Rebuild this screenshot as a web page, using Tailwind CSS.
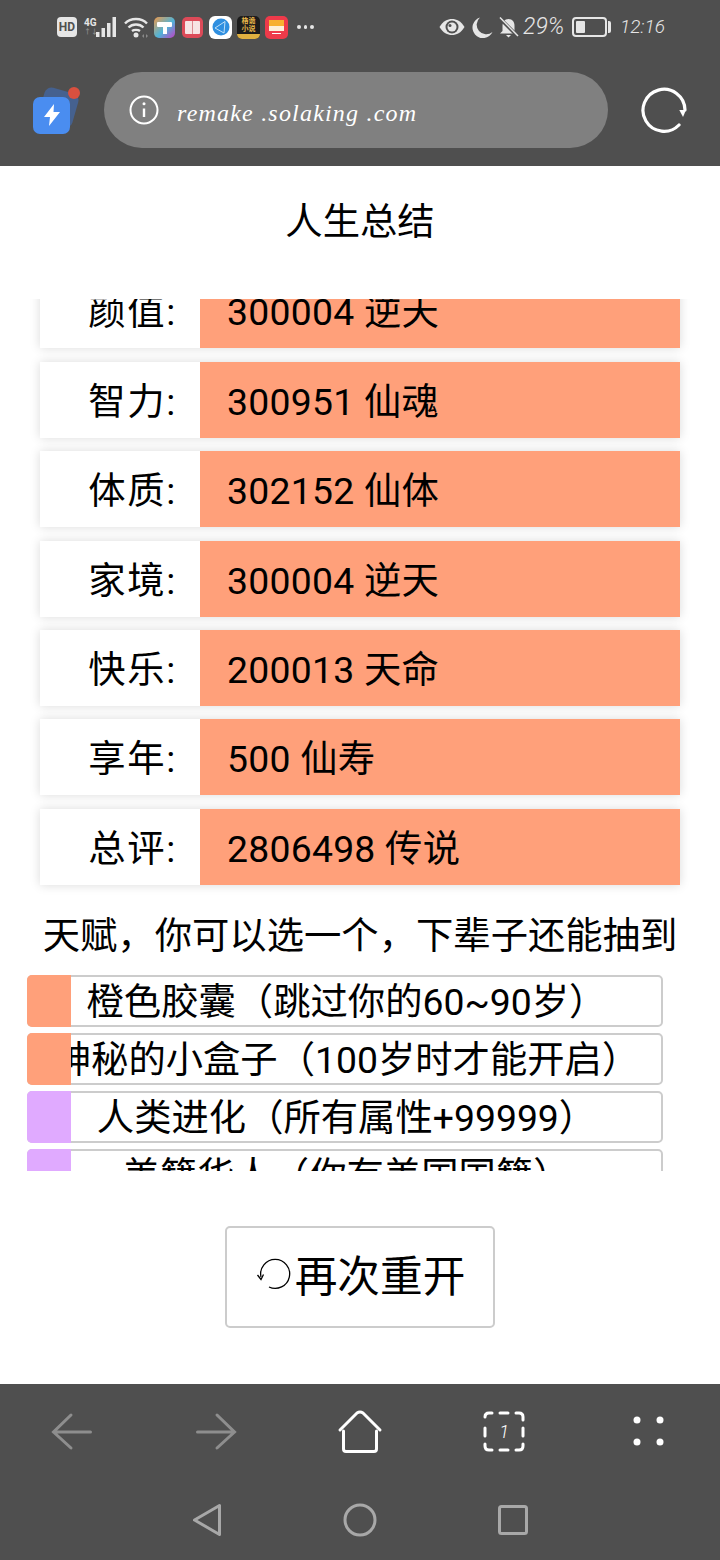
<!DOCTYPE html>
<html lang="zh">
<head>
    <meta charset="UTF-8">
    <meta name="viewport" content="width=device-width, initial-scale=1.0">
    <title>人生总结</title>
    <script src="https://cdn.jsdelivr.net/npm/@tailwindcss/browser@4"></script>
</head>
<body class="bg-white text-black font-['Roboto','Noto_Sans_CJK_SC',sans-serif]">
<div class="w-[720px] h-[1560px] flex flex-col overflow-hidden">

    <!-- 顶部状态栏 + 地址栏 -->
    <header class="h-[166px] shrink-0 bg-[#4f4f4f] flex flex-col">
        <div class="h-[72px] shrink-0 pl-[57px] pr-[57px] pt-[16px] flex justify-between items-start">
            <div class="flex items-center h-[22px]">
                <div class="w-[20px] h-[20px] rounded-[4px] bg-[#e6e6e6] text-[#4f4f4f] text-[12px] font-bold leading-[20px] text-center">HD</div>
                <div class="ml-[7px] flex flex-col w-[12px] text-[#e6e6e6] text-[10px] font-bold leading-[11px]"><span>4G</span><span class="text-[#8a8a8a] text-[7px] leading-[9px]">↑↓</span></div>
                <svg class="w-[21px] h-[21px]" viewBox="0 0 21 21" fill="#e6e6e6">
                    <rect x="0" y="15" width="3.500" height="5"/><rect x="5.500" y="11" width="3.500" height="9"/><rect x="11" y="6" width="3.500" height="14"/><rect x="16.500" y="0" width="3.500" height="20"/>
                </svg>
                <svg class="ml-[7px] w-[24px] h-[21px]" viewBox="0 0 24 21" fill="none" stroke="#e6e6e6" stroke-width="2.400">
                    <path d="M1 6.500C6.500 0.500 17.500 0.500 23 6.500"/><path d="M4.500 10.500C8.500 6.500 15.500 6.500 19.500 10.500"/><path d="M8 14C10 12.500 14 12.500 16 14"/>
                    <circle cx="12" cy="18" r="2.500" fill="#e6e6e6" stroke="none"/>
                    <path d="M18 19L20 17V21ZM24 19L22 17V21Z" fill="#8a8a8a" stroke="none"/>
                </svg>
                <div class="ml-[6px] w-[21px] h-[21px] rounded-[5px] bg-[linear-gradient(135deg,#f09a4a_0%,#4fb4d8_55%,#c13fc4_100%)] flex flex-col items-center pt-[5px]">
                    <div class="w-[15px] h-[5px] bg-white rounded-[1px]"></div>
                    <div class="w-[4px] h-[7px] bg-white"></div>
                </div>
                <div class="ml-[7px] w-[21px] h-[21px] rounded-[5px] bg-[#dc4a58] flex items-center justify-center">
                    <div class="w-[15px] h-[13px] bg-[#f7e4e4] flex justify-center rounded-[1px]"><div class="w-[1px] h-full bg-[#dc8a90]"></div></div>
                </div>
                <div class="ml-[6px] w-[23px] h-[23px] rounded-[6px] bg-white flex items-center justify-center">
                    <svg class="w-[18px] h-[18px]" viewBox="0 0 18 18"><circle cx="9" cy="9" r="8.500" fill="#2f8fe0"/><path d="M3 10L13 3.500M3 10L12 15M13 3.500L12 15" stroke="#bfe0f8" stroke-width="1" fill="none"/></svg>
                </div>
                <div class="ml-[5px] w-[23px] h-[23px] rounded-[5px] bg-[#1c1c1c] flex flex-col items-center text-[#e8b84a] text-[7px] leading-[8px] font-bold pt-[1px] relative overflow-hidden">
                    <span>格诡</span><span>小说</span>
                    <div class="absolute bottom-0 left-0 right-0 h-[5px] bg-[#e0b040]"></div>
                </div>
                <div class="ml-[5px] w-[23px] h-[23px] rounded-[5px] bg-[#ee3a4a] flex flex-col items-center pt-[4px]">
                    <div class="w-[15px] h-[6px] bg-[#f7b030]"></div>
                    <div class="w-[15px] h-[5px] bg-[#fdf0d8]"></div>
                    <div class="mt-[2px] w-[9px] h-[1px] bg-white"></div>
                </div>
                <div class="ml-[9px] flex gap-[3px]">
                    <div class="w-[3.500px] h-[3.500px] rounded-full bg-[#e6e6e6]"></div>
                    <div class="w-[3.500px] h-[3.500px] rounded-full bg-[#e6e6e6]"></div>
                    <div class="w-[3.500px] h-[3.500px] rounded-full bg-[#e6e6e6]"></div>
                </div>
            </div>
            <div class="flex items-center h-[22px]">
                <svg class="w-[26px] h-[18px]" viewBox="0 0 26 18">
                    <path d="M0.500 9C4 3 8.500 1 13 1S22 3 25.500 9C22 15 17.500 17 13 17S4 15 0.500 9Z" fill="#e6e6e6"/>
                    <circle cx="13" cy="9" r="6.500" fill="#4f4f4f"/><circle cx="13" cy="9" r="4.500" fill="#e6e6e6"/><circle cx="11" cy="7.500" r="1.500" fill="#4f4f4f"/>
                </svg>
                <svg class="w-[21px] h-[21px] ml-[7px]" viewBox="0 0 21 21"><path d="M8 0.500A10.500 10.500 0 1 0 20.500 15 A9 9 0 0 1 8 0.500Z" fill="#e6e6e6"/></svg>
                <svg class="w-[21px] h-[21px] ml-[5px]" viewBox="0 0 20 21" fill="#e6e6e6"><path d="M10 2C6 2 4 5 4 9V14L1.500 16.500H18.500L16 14V9C16 5 14 2 10 2Z"/><path d="M7.500 18H12.500L10 20.500Z"/><path d="M1 1L19 19" stroke="#4f4f4f" stroke-width="3.500"/><path d="M1.500 0.500L19.500 19" stroke="#e6e6e6" stroke-width="1.500"/></svg>
                <span class="ml-[4px] w-[42px] whitespace-nowrap font-['Roboto',sans-serif] font-light italic text-[#e6e6e6] text-[23px] leading-[22px]">29%</span>
                <div class="ml-[7px] w-[35px] h-[20px] rounded-[4px] border-2 border-[#e6e6e6] p-[2px]"><div class="w-[9px] h-full bg-[#e6e6e6] rounded-[1px]"></div></div>
                <div class="ml-[1px] w-[3px] h-[12px] bg-[#e6e6e6] rounded-r-[2px]"></div>
                <span class="ml-[9px] w-[43px] whitespace-nowrap font-['Roboto',sans-serif] font-light italic text-[#e6e6e6] text-[19px] leading-[22px]">12:16</span>
            </div>
        </div>
        <div class="h-[76px] shrink-0 flex items-center pl-[32px]">
            <div class="relative w-[50px] h-[50px] -mt-[1px]">
                <div class="absolute left-[9px] top-[5px] w-[35px] h-[35px] rounded-[7px] bg-[#45618f] rotate-[16deg]"></div>
                <div class="absolute left-[1px] top-[12px] w-[37px] h-[37px] rounded-[7px] bg-[#4a8df0] flex items-center justify-center">
                    <svg class="w-[16px] h-[22px]" viewBox="0 0 16 22"><path d="M10 0L0 13H6L5 22L16 8H9.500Z" fill="#fff"/></svg>
                </div>
                <div class="absolute left-[36px] top-[2px] w-[12px] h-[12px] rounded-full bg-[#d9503f]"></div>
            </div>
            <div class="ml-[22px] w-[504px] h-[76px] rounded-full bg-[#808080] flex items-center pl-[25px]">
                <svg class="w-[30px] h-[30px]" viewBox="0 0 30 30" fill="none" stroke="#fff" stroke-width="2"><circle cx="15" cy="15" r="13.500"/><path d="M15 13.500V22" stroke-width="2.400"/><circle cx="15" cy="8.800" r="1.500" fill="#fff" stroke="none"/></svg>
                <span class="ml-[18px] mt-[6px] font-['Liberation_Serif',serif] italic text-white text-[24px] tracking-[1.200px]">remake .solaking .com</span>
            </div>
            <svg class="ml-[32px] w-[48px] h-[48px]" viewBox="0 0 48 48" fill="none" stroke="#fff" stroke-width="3.200" stroke-linecap="round">
                <path d="M39 39A21 21 0 1 1 45 24"/>
                <path d="M39.300 24H46L43 31Z" fill="#fff" stroke="none"/>
            </svg>
        </div>
    </header>

    <main class="flex-1 min-h-0 flex flex-col">
        <h1 class="text-center text-[37.330px] leading-[50px] h-[133px] shrink-0 pt-[31px]">人生总结</h1>

        <!-- 属性列表，顶部被滚动裁切 -->
        <div class="h-[600px] shrink-0 overflow-hidden">
            <div class="flex flex-col gap-[13.400px] mx-[40px] -mt-[26.670px]">
                <div class="flex h-[76px] shadow-[0_0_10px_rgba(0,0,0,0.15)] text-[37.330px] leading-[80px]">
                    <div class="w-[160px] bg-white text-right pr-[23px] tracking-[1.700px]">颜值:</div>
                    <div class="flex-1 bg-[#ffa07a] pl-[27px] tracking-[0.250px]">300004 逆天</div>
                </div>
                <div class="flex h-[76px] shadow-[0_0_10px_rgba(0,0,0,0.15)] text-[37.330px] leading-[80px]">
                    <div class="w-[160px] bg-white text-right pr-[23px] tracking-[1.700px]">智力:</div>
                    <div class="flex-1 bg-[#ffa07a] pl-[27px] tracking-[0.250px]">300951 仙魂</div>
                </div>
                <div class="flex h-[76px] shadow-[0_0_10px_rgba(0,0,0,0.15)] text-[37.330px] leading-[80px]">
                    <div class="w-[160px] bg-white text-right pr-[23px] tracking-[1.700px]">体质:</div>
                    <div class="flex-1 bg-[#ffa07a] pl-[27px] tracking-[0.250px]">302152 仙体</div>
                </div>
                <div class="flex h-[76px] shadow-[0_0_10px_rgba(0,0,0,0.15)] text-[37.330px] leading-[80px]">
                    <div class="w-[160px] bg-white text-right pr-[23px] tracking-[1.700px]">家境:</div>
                    <div class="flex-1 bg-[#ffa07a] pl-[27px] tracking-[0.250px]">300004 逆天</div>
                </div>
                <div class="flex h-[76px] shadow-[0_0_10px_rgba(0,0,0,0.15)] text-[37.330px] leading-[80px]">
                    <div class="w-[160px] bg-white text-right pr-[23px] tracking-[1.700px]">快乐:</div>
                    <div class="flex-1 bg-[#ffa07a] pl-[27px] tracking-[0.250px]">200013 天命</div>
                </div>
                <div class="flex h-[76px] shadow-[0_0_10px_rgba(0,0,0,0.15)] text-[37.330px] leading-[80px]">
                    <div class="w-[160px] bg-white text-right pr-[23px] tracking-[1.700px]">享年:</div>
                    <div class="flex-1 bg-[#ffa07a] pl-[27px] tracking-[0.250px]">500 仙寿</div>
                </div>
                <div class="flex h-[76px] shadow-[0_0_10px_rgba(0,0,0,0.15)] text-[37.330px] leading-[80px]">
                    <div class="w-[160px] bg-white text-right pr-[23px] tracking-[1.700px]">总评:</div>
                    <div class="flex-1 bg-[#ffa07a] pl-[27px] tracking-[0.250px]">2806498 传说</div>
                </div>
            </div>
        </div>

        <p class="text-center text-[37.330px] leading-[52px] h-[62px] shrink-0 mt-[11px] whitespace-nowrap">天赋，你可以选一个，下辈子还能抽到</p>

        <!-- 天赋列表 -->
        <div class="pl-[27px] w-[663px] h-[196px] shrink-0 overflow-hidden flex flex-col gap-[6.270px] mt-[2.500px] text-[37.330px] leading-[50px]">
            <div class="relative h-[52px] shrink-0 border-2 border-[#ccc] rounded-[5px] pl-[3px] whitespace-nowrap flex justify-center">
                <span>橙色胶囊（跳过你的60~90岁）</span>
                <div class="absolute -left-[2px] -top-[2px] w-[44px] h-[52px] bg-[#ffa07a] rounded-l-[5px]"></div>
            </div>
            <div class="relative h-[52px] shrink-0 border-2 border-[#ccc] rounded-[5px] pl-[3px] whitespace-nowrap flex justify-center">
                <span>神秘的小盒子（100岁时才能开启）</span>
                <div class="absolute -left-[2px] -top-[2px] w-[44px] h-[52px] bg-[#ffa07a] rounded-l-[5px]"></div>
            </div>
            <div class="relative h-[52px] shrink-0 border-2 border-[#ccc] rounded-[5px] pl-[3px] whitespace-nowrap flex justify-center">
                <span>人类进化（所有属性+99999）</span>
                <div class="absolute -left-[2px] -top-[2px] w-[44px] h-[52px] bg-[#e0aaff] rounded-l-[5px]"></div>
            </div>
            <div class="relative h-[52px] shrink-0 border-2 border-[#ccc] rounded-[5px] pl-[3px] whitespace-nowrap flex justify-center">
                <span>美籍华人（你有美国国籍）</span>
                <div class="absolute -left-[2px] -top-[2px] w-[44px] h-[52px] bg-[#e0aaff] rounded-l-[5px]"></div>
            </div>
        </div>

        <button class="mx-auto mt-[55.500px] w-[270px] h-[102px] shrink-0 border-2 border-[#ccc] rounded-[5px] bg-white text-[42.670px] flex items-center justify-center">
            <svg class="w-[40px] h-[40px] -mt-[4px]" viewBox="0 0 40 40" fill="none" stroke="#000" stroke-width="1.300">
                <path d="M6 22A14.500 14.500 0 1 1 14 32"/>
                <path d="M2.500 20L6 24.500L8.500 19.500"/>
            </svg>
            <span>再次重开</span>
        </button>
    </main>

    <!-- 底部导航 -->
    <footer class="h-[176px] shrink-0 bg-[#4f4f4f] flex flex-col">
        <div class="h-[96px] shrink-0 flex justify-between items-center px-[48px]">
            <svg class="w-[48px] h-[48px]" viewBox="0 0 48 48" fill="none" stroke="#8e8e8e" stroke-width="3" stroke-linecap="round"><path d="M5.500 24H42.500M23 7L5.500 24L23 40"/></svg>
            <svg class="w-[48px] h-[48px]" viewBox="0 0 48 48" fill="none" stroke="#8e8e8e" stroke-width="3" stroke-linecap="round"><path d="M5.500 24H42.500M25 7L42.500 24L25 40"/></svg>
            <svg class="w-[48px] h-[48px]" viewBox="0 0 48 48" fill="none" stroke="#fff" stroke-width="3" stroke-linecap="round" stroke-linejoin="round"><path d="M4 22L21 5Q24 3 27 5L44 22M7.500 23V41Q7.500 43.500 10 43.500H38Q40.500 43.500 40.500 41V23"/></svg>
            <div class="relative w-[48px] h-[48px] flex items-center justify-center">
                <svg class="absolute inset-0" viewBox="0 0 48 48" fill="none" stroke="#fff" stroke-width="3" stroke-linecap="round"><path d="M5 9Q5 5 9 5H12M20 5H28M36 5H39Q43 5 43 9V12M43 20V28M43 36V38Q43 42 39 42H36M28 42H20M12 42H9Q5 42 5 38V36M5 28V20"/></svg>
                <span class="font-['Roboto',sans-serif] font-light italic text-white text-[18px] -mt-[1px]">1</span>
            </div>
            <svg class="w-[48px] h-[48px]" viewBox="0 0 48 48" fill="#fff"><circle cx="13" cy="12" r="3.500"/><circle cx="36" cy="12" r="3.500"/><circle cx="13" cy="34" r="3.500"/><circle cx="36" cy="34" r="3.500"/></svg>
        </div>
        <div class="flex justify-center gap-[115px] mt-[21px]">
            <svg class="w-[38px] h-[38px]" viewBox="0 0 38 38" fill="none" stroke="#a8a8a8" stroke-width="3" stroke-linejoin="round"><path d="M31.500 4.500V33.500L6.500 19Z"/></svg>
            <svg class="w-[38px] h-[38px]" viewBox="0 0 38 38" fill="none" stroke="#a8a8a8" stroke-width="3"><circle cx="19" cy="19" r="15"/></svg>
            <svg class="w-[38px] h-[38px]" viewBox="0 0 38 38" fill="none" stroke="#a8a8a8" stroke-width="3" stroke-linejoin="round"><rect x="5.500" y="5.500" width="27" height="27" rx="2"/></svg>
        </div>
    </footer>
</div>
</body>
</html>
